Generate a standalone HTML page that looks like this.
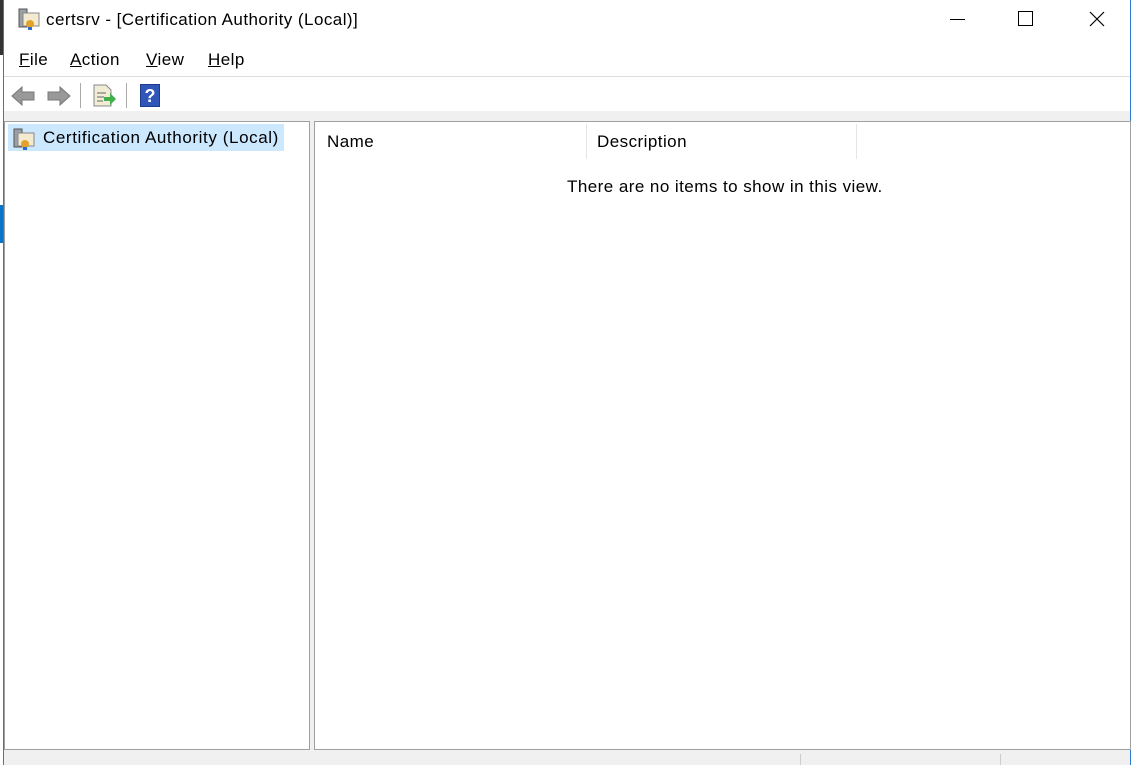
<!DOCTYPE html><html><head><style>
body{margin:0;width:1133px;height:765px;overflow:hidden;background:#fff;font-family:"Liberation Sans",sans-serif;position:relative}
.a{position:absolute}
.t{font-size:16px;color:#000;letter-spacing:0.45px;white-space:nowrap}
u{text-decoration:underline}
</style></head><body>
<div class="a" style="left:0;top:0;width:3px;height:765px;background:#fff"></div>
<div class="a" style="left:0;top:0;width:3px;height:55px;background:#333"></div>
<div class="a" style="left:0;top:205px;width:3px;height:38px;background:#0a74c9"></div>
<div class="a" style="left:3px;top:0;width:1px;height:765px;background:#2b7bd0"></div>
<div class="a" style="left:1130px;top:0;width:1px;height:765px;background:#2b7bd0"></div>
<svg class="a" style="left:17px;top:7px" width="24" height="24" viewBox="0 0 24 24"><rect x="2" y="2" width="8" height="18" fill="#9aa0a6" stroke="#555"/><rect x="6" y="6" width="16" height="13" fill="#f3ead0" stroke="#888"/><circle cx="13" cy="17" r="4" fill="#e2a22a"/><rect x="11" y="20" width="4" height="3" fill="#2e6bd1"/></svg>
<div class="a t" style="left:46px;top:10px;font-size:17px">certsrv - [Certification Authority (Local)]</div>
<div class="a" style="left:950px;top:19px;width:15px;height:1px;background:#000"></div>
<div class="a" style="left:1018px;top:11px;width:13px;height:13px;border:1px solid #000"></div>
<svg class="a" style="left:1089px;top:11px" width="16" height="16"><path d="M1 1L15 15M15 1L1 15" stroke="#000" stroke-width="1.2"/></svg>
<div class="a t" style="left:19px;top:50px;font-size:17px"><u>F</u>ile</div>
<div class="a t" style="left:70px;top:50px;font-size:17px"><u>A</u>ction</div>
<div class="a t" style="left:146px;top:50px;font-size:17px"><u>V</u>iew</div>
<div class="a t" style="left:208px;top:50px;font-size:17px"><u>H</u>elp</div>
<div class="a" style="left:4px;top:76px;width:1126px;height:1px;background:#ddd"></div>
<svg class="a" style="left:10px;top:84px" width="62" height="24"><path d="M2 12L12 3V8H24V16H12V21Z" fill="#999" stroke="#777"/><path d="M60 12L50 3V8H38V16H50V21Z" fill="#999" stroke="#777"/></svg>
<div class="a" style="left:80px;top:83px;width:1px;height:25px;background:#aaa"></div>
<svg class="a" style="left:92px;top:84px" width="26" height="24"><path d="M2 1H14L19 6V22H2Z" fill="#f1ecd6" stroke="#888"/><path d="M5 9H14M5 13H12M5 17H11" stroke="#666"/><path d="M12 13H18V9L24 15L18 21V17H12Z" fill="#3fb04a"/></svg>
<div class="a" style="left:126px;top:83px;width:1px;height:25px;background:#aaa"></div>
<div class="a" style="left:140px;top:84px;width:20px;height:23px;background:#2f56b8;color:#fff;font-weight:bold;font-size:18px;text-align:center;line-height:23px;border:1px solid #1d3c8a;box-sizing:border-box">?</div>
<div class="a" style="left:4px;top:111px;width:1126px;height:654px;background:#f0f0f0"></div>
<div class="a" style="left:4px;top:121px;width:304px;height:627px;background:#fff;border:1px solid #a0a0a0"></div>
<div class="a" style="left:8px;top:124px;width:276px;height:27px;background:#cce8ff"></div>
<svg class="a" style="left:12px;top:127px" width="24" height="24" viewBox="0 0 24 24"><rect x="2" y="2" width="8" height="18" fill="#9aa0a6" stroke="#555"/><rect x="6" y="6" width="16" height="13" fill="#f3ead0" stroke="#888"/><circle cx="13" cy="17" r="4" fill="#e2a22a"/><rect x="11" y="20" width="4" height="3" fill="#2e6bd1"/></svg>
<div class="a t" style="left:43px;top:128px;font-size:17px;letter-spacing:0.6px">Certification Authority (Local)</div>
<div class="a" style="left:314px;top:121px;width:815px;height:627px;background:#fff;border:1px solid #a0a0a0"></div>
<div class="a t" style="left:327px;top:132px;font-size:17px">Name</div>
<div class="a" style="left:586px;top:124px;width:1px;height:35px;background:#e5e5e5"></div>
<div class="a t" style="left:597px;top:132px;font-size:17px">Description</div>
<div class="a" style="left:856px;top:124px;width:1px;height:35px;background:#e5e5e5"></div>
<div class="a t" style="left:567px;top:177px;font-size:17px">There are no items to show in this view.</div>
<div class="a" style="left:800px;top:754px;width:1px;height:11px;background:#ccc"></div>
<div class="a" style="left:1000px;top:754px;width:1px;height:11px;background:#ccc"></div>
</body></html>
